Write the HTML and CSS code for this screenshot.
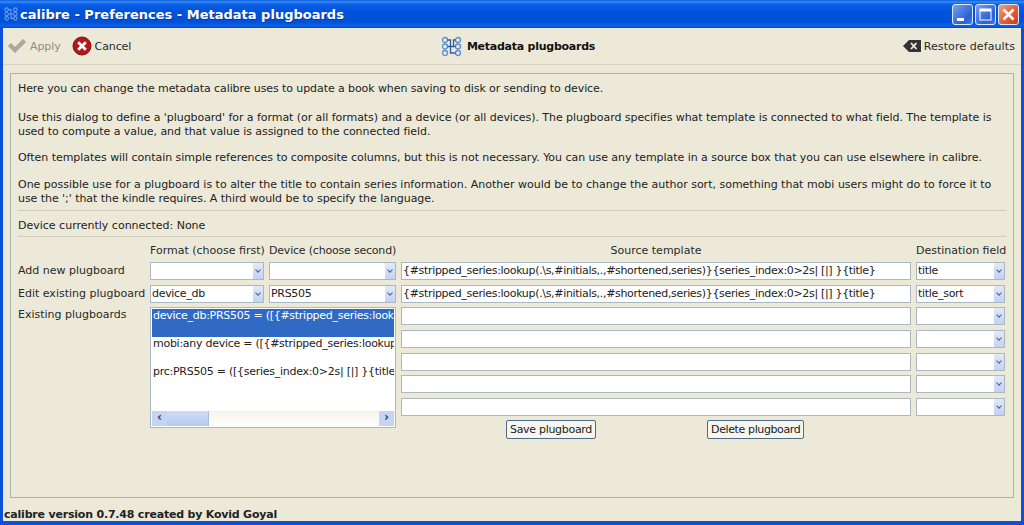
FILE: index.html
```html
<!DOCTYPE html>
<html lang="en">
<head>
<meta charset="utf-8">
<title>calibre - Preferences - Metadata plugboards</title>
<link rel="stylesheet" href="styles.css">
</head>
<body>
<div class="window">
  <header class="titlebar">
    <svg class="app-icon" width="14" height="16" viewBox="0 0 16 16" fill="none" stroke="#8fb2e8" stroke-width="1.200"><circle cx="3" cy="3" r="2"/><circle cx="3" cy="8" r="2"/><circle cx="3" cy="13" r="2"/><circle cx="13" cy="3" r="2"/><circle cx="13" cy="8" r="2"/><circle cx="13" cy="13" r="2"/><path d="M5 3h3v10h3M5 8h6"/></svg>
    <span class="title-text">calibre - Preferences - Metadata plugboards</span>
    <div class="win-buttons">
      <span class="win-btn"><svg width="21" height="21" viewBox="0 0 21 21"><rect x="5" y="14" width="7" height="3" fill="#fff"/></svg></span>
      <span class="win-btn"><svg width="21" height="21" viewBox="0 0 21 21" fill="none"><rect x="5" y="5" width="11" height="11" stroke="#fff" stroke-width="1"/><rect x="5" y="5" width="11" height="2.500" fill="#fff"/></svg></span>
      <span class="win-btn win-close"><svg width="21" height="21" viewBox="0 0 21 21"><path d="M5.500 5.500l10 10M15.500 5.500l-10 10" stroke="#fff" stroke-width="2.600"/></svg></span>
    </div>
  </header>
  <div class="body">
    <div class="toolbar">
      <div class="tool-left">
        <span class="tool disabled">
          <svg width="20" height="18" viewBox="0 0 20 18"><path d="M1 9l3-3 4 4 8-8 3 3-11 11z" fill="#aaa89f" stroke="#bdbbb0" stroke-width=".6"/></svg>
          Apply
        </span>
        <span class="tool">
          <svg width="20" height="20" viewBox="0 0 20 20"><circle cx="10" cy="10" r="9" fill="#b8141c" stroke="#7e0c10" stroke-width="1"/><path d="M6.200 6.200l7.600 7.600M13.800 6.200l-7.600 7.600" stroke="#fff" stroke-width="2.800"/></svg>
          Cancel
        </span>
      </div>
      <div class="tool-center">
        <svg width="21" height="21" viewBox="0 0 21 21" fill="none" stroke="#5f8fce" stroke-width="1.300"><circle cx="4" cy="4" r="2.500"/><circle cx="17" cy="4" r="2.500"/><circle cx="4" cy="17" r="2.500"/><circle cx="17" cy="17" r="2.500"/><circle cx="4" cy="10.500" r="2.500"/><circle cx="17" cy="10.500" r="2.500"/><path d="M6.500 4h3v13h5M6.500 10.500h8M14.500 4h-2v6.500" stroke="#2b5aa8"/></svg>
        <span class="tool-heading">Metadata plugboards</span>
      </div>
      <div class="tool-right">
        <span class="tool">
          <svg width="18" height="12" viewBox="0 0 18 12"><path d="M0 6l6-6h12v12H6z" fill="#33332f"/><path d="M8 3l5.500 6M13.500 3L8 9" stroke="#eee" stroke-width="1.800"/></svg>
          Restore defaults
        </span>
      </div>
    </div>
    <main class="panel">
      <p class="intro first">Here you can change the metadata calibre uses to update a book when saving to disk or sending to device.</p>
      <p class="intro second">Use this dialog to define a 'plugboard' for a format (or all formats) and a device (or all devices). The plugboard specifies what template is connected to what field. The template is<br>used to compute a value, and that value is assigned to the connected field.</p>
      <p class="intro third">Often templates will contain simple references to composite columns, but this is not necessary. You can use any template in a source box that you can use elsewhere in calibre.</p>
      <p class="intro"><span class="wide-line">One possible use for a plugboard is to alter the title to contain series information. Another would be to change the author sort, something that mobi users might do to force it to</span><br>use the ';' that the kindle requires. A third would be to specify the language.</p>
      <div class="device-row">Device currently connected: None</div>
      <div class="form">
        <div class="head col-format">Format (choose first)</div>
        <div class="head col-device">Device (choose second)</div>
        <div class="head col-source center">Source template</div>
        <div class="head col-dest">Destination field</div>

        <div class="row-label r1">Add new plugboard</div>
        <div class="combo col-format r1"><span></span><i class="drop"></i></div>
        <div class="combo col-device r1"><span></span><i class="drop"></i></div>
        <div class="line col-source r1">{#stripped_series:lookup(.\s,#initials,.,#shortened,series)}{series_index:0&gt;2s| [|] }{title}</div>
        <div class="combo col-dest r1"><span>title</span><i class="drop"></i></div>

        <div class="row-label r2">Edit existing plugboard</div>
        <div class="combo col-format r2"><span>device_db</span><i class="drop"></i></div>
        <div class="combo col-device r2"><span>PRS505</span><i class="drop"></i></div>
        <div class="line col-source r2">{#stripped_series:lookup(.\s,#initials,.,#shortened,series)}{series_index:0&gt;2s| [|] }{title}</div>
        <div class="combo col-dest r2"><span>title_sort</span><i class="drop"></i></div>

        <div class="row-label list-label r3">Existing plugboards</div>
        <div class="listbox">
          <div class="items">
            <div class="item selected">device_db:PRS505 = ([{#stripped_series:look</div>
            <div class="item">mobi:any device = ([{#stripped_series:lookup</div>
            <div class="item">prc:PRS505 = ([{series_index:0&gt;2s| [|] }{title}</div>
          </div>
          <div class="hscroll">
            <span class="sb-btn">&#8249;</span>
            <span class="sb-thumb"></span>
            <span class="sb-track"></span>
            <span class="sb-btn">&#8250;</span>
          </div>
        </div>
        <div class="line col-source r3"></div><div class="combo col-dest r3"><span></span><i class="drop"></i></div>
        <div class="line col-source r4"></div><div class="combo col-dest r4"><span></span><i class="drop"></i></div>
        <div class="line col-source r5"></div><div class="combo col-dest r5"><span></span><i class="drop"></i></div>
        <div class="line col-source r6"></div><div class="combo col-dest r6"><span></span><i class="drop"></i></div>
        <div class="line col-source r7"></div><div class="combo col-dest r7"><span></span><i class="drop"></i></div>
        <div class="actions">
          <button class="btn" type="button">Save plugboard</button>
          <button class="btn delete" type="button">Delete plugboard</button>
        </div>
      </div>
    </main>
    <footer class="status">calibre version 0.7.48 created by Kovid Goyal</footer>
  </div>
</div>
</body>
</html>
```
FILE: styles.css
```css
* { box-sizing: border-box; }
html, body { margin: 0; padding: 0; height: 100%; overflow: hidden; }
body { font-family: "DejaVu Sans", sans-serif; font-size: 11px; color: #222; background: #ece9d8; }
.window { width: 1024px; height: 525px; display: flex; flex-direction: column; background: #0a50d8; }
.titlebar {
  height: 28px; flex: none; display: flex; align-items: center; padding: 0 5px 0 4px;
  background: linear-gradient(#0a5ce0 0, #3a8cf4 2px, #0b5fe6 4px, #0052dc 12px, #0050d8 22px, #0a62e8 26px, #0a45b8 28px);
}
.app-icon { flex: none; margin-right: 2px; opacity: .8; }
.title-text { font-size: 13px; font-weight: bold; color: #fff; text-shadow: 1px 1px 0 #0a3a9c; }
.win-buttons { margin-left: auto; display: flex; gap: 2px; }
.win-btn { width: 21px; height: 21px; border: 1px solid #dfe8fb; border-radius: 3px; background: linear-gradient(135deg, #7ba2ee, #2a5fd8 70%, #3f78ea); display: block; }
.win-btn svg { display: block; margin: -1px; }
.win-close { background: linear-gradient(135deg, #f0a088, #df5a30 60%, #c8401c); }
.body { flex: 1; margin: 0 3px 4px; background: #ece9d8; display: flex; flex-direction: column; min-height: 0; }
.toolbar { height: 37px; flex: none; display: grid; grid-template-columns: 1fr auto 1fr; align-items: center; padding: 0 6px 0 4px; border-bottom: 1px solid #d4d1c0; }
.tool-left { display: flex; gap: 11px; }
.tool-right { display: flex; justify-content: flex-end; }
.tool { display: inline-flex; align-items: center; gap: 3px; color: #2a2a2a; letter-spacing: -.1px; }
.tool-right .tool { letter-spacing: .1px; }
.disabled { color: #8f8d84; }
.tool-center { display: flex; align-items: center; gap: 5px; margin-left: 14px; }
.tool-heading { font-weight: bold; color: #111; letter-spacing: -.25px; }
.panel { flex: none; height: 425px; margin: 8px 7px 0; border: 1px solid #a9b0b4; padding: 0 7px; }
.intro { margin: 0 0 13px; line-height: 14px; letter-spacing: -.05px; }
.intro.first { margin: 8px 0 15px; letter-spacing: -.086px; }
.intro.second { margin-bottom: 12px; letter-spacing: -.055px; }
.intro.third { letter-spacing: -.04px; }
.wide-line { letter-spacing: -.005px; }
.device-row { border-top: 1px solid #d0cdbd; border-bottom: 1px solid #d0cdbd; height: 27px; padding-top: 2px; line-height: 26px; margin-top: -9px; }
.form {
  display: grid; margin-top: 7px;
  grid-template-columns: 127px 114px 127px 510px 89px;
  column-gap: 5px;
  grid-template-rows: 13.500px repeat(7, 18px) 23px;
  row-gap: 4.650px;
}
.head { white-space: nowrap; line-height: 14px; color: #2a2a2a; }
.col-device.head { letter-spacing: -.2px; }
.center { text-align: center; }
.col-format { grid-column: 2; } .col-device { grid-column: 3; } .col-source { grid-column: 4; } .col-dest { grid-column: 5; }
.row-label { grid-column: 1; white-space: nowrap; line-height: 18px; color: #2a2a2a; }
.list-label { line-height: 15px; }
.r1 { grid-row: 2; } .r2 { grid-row: 3; } .r3 { grid-row: 4; } .r4 { grid-row: 5; } .r5 { grid-row: 6; } .r6 { grid-row: 7; } .r7 { grid-row: 8; }
.combo { display: flex; align-items: center; background: #fff; border: 1px solid #abb8c2; height: 18px; overflow: hidden; line-height: 16px; letter-spacing: -.3px; }
.combo span { flex: 1; padding-left: 1px; }
.drop { width: 10px; height: 16px; flex: none; background: linear-gradient(#e2e9f8, #c2d2f2); position: relative; }
.drop::after { content: ""; position: absolute; left: 2.500px; top: 5px; width: 3px; height: 3px; border: solid #4a5f90; border-width: 0 1.500px 1.500px 0; transform: rotate(45deg); }
.line { background: #fff; border: 1px solid #abb8c2; height: 18px; line-height: 16px; padding-left: 1px; white-space: nowrap; overflow: hidden; letter-spacing: -.32px; }
.listbox { grid-column: 2 / 4; grid-row: 4 / 9; background: #fff; border: 1px solid #abb8c2; display: flex; flex-direction: column; height: 121px; width: 246px; overflow: hidden; }
.items { flex: 1; padding: 1px 1px 0; min-height: 0; overflow: hidden; }
.item { height: 28px; line-height: 14px; padding: 0 1px; white-space: nowrap; overflow: hidden; letter-spacing: -.27px; }
.selected { background: #316ac5; color: #fff; }
.hscroll { height: 16px; flex: none; display: flex; background: linear-gradient(#f4f3ed, #fff); padding: 0 1px 1px; }
.sb-btn { width: 15px; flex: none; background: #c5d4f2; color: #2a3f78; font-weight: bold; text-align: center; line-height: 13px; font-size: 12px; }
.sb-thumb { width: 42px; flex: none; background: linear-gradient(#cfdcf6, #b6c9f0); border-right: 1px solid #a8bce4; }
.sb-track { flex: 1; }
.actions { grid-column: 4; grid-row: 9; display: flex; gap: 112px; padding-left: 105px; align-items: flex-start; margin-top: -.500px; }
.btn { height: 19px; padding: 0 3px; font: 11px "DejaVu Sans", sans-serif; letter-spacing: -.3px; color: #222; background: #f6f5ee; border: 1px solid #4d6a86; border-radius: 2px; white-space: nowrap; }
.delete { letter-spacing: -.38px; margin-left: -1px; }
.status { flex: 1; padding: 10px 2px 0 1px; font-weight: bold; line-height: 14px; color: #222; letter-spacing: -.2px; }
```
